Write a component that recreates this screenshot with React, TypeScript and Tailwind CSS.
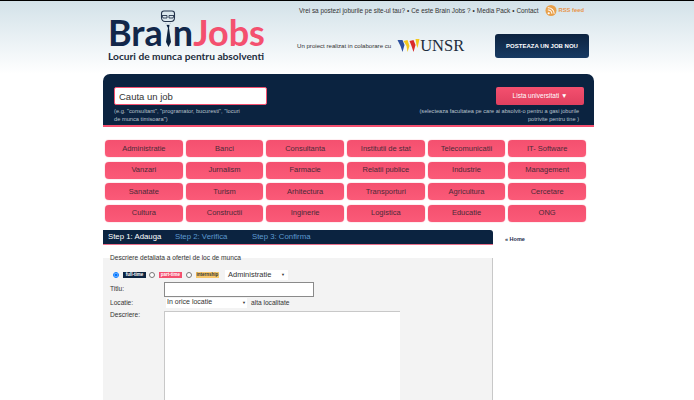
import React from "react";

const categories = [
  "Administratie", "Banci", "Consultanta", "Institutii de stat", "Telecomunicatii", "IT- Software",
  "Vanzari", "Jurnalism", "Farmacie", "Relatii publice", "Industrie", "Management",
  "Sanatate", "Turism", "Arhitectura", "Transporturi", "Agricultura", "Cercetare",
  "Cultura", "Constructii", "Inginerie", "Logistica", "Educatie", "ONG",
];

const Tie = () => (
  <svg width="16" height="38" viewBox="0 0 16 38" className="ml-[-3px] mr-[-3px] shrink-0">
    <path d="M4 1h8c1.500 0 2.500 1 2.500 2.500v4c0 2.500-1.500 4-3.500 4H5c-2 0-3.500-1.500-3.500-4v-4C1.500 2 2.500 1 4 1z" fill="none" stroke="#23324a" strokeWidth="1.1" />
    <path d="M2 5.500h5v2.500H3zM9 5.500h5l-1 2.500H9z" fill="none" stroke="#23324a" strokeWidth="0.9" />
    <path d="M5 13l3 2 3-2" fill="none" stroke="#b8c2cc" strokeWidth="0.8" />
    <path d="M6.500 15h3l-.5 3 2 14-2.500 5-2.500-5 2-14z" fill="#0c2340" />
  </svg>
);

const RssIcon = () => (
  <svg width="12" height="11" viewBox="0 0 13 12">
    <circle cx="6.500" cy="6" r="6" fill="#e8a04a" />
    <circle cx="4" cy="9" r="1.200" fill="#fff" />
    <path d="M3 5.500a4 4 0 0 1 4.500 4M3 3a6.500 6.500 0 0 1 7 6.500" fill="none" stroke="#fff" strokeWidth="1.100" />
  </svg>
);

const UnsrLogo = () => (
  <div className="flex items-center">
    <svg width="23" height="14" viewBox="0 0 22 14">
      <path d="M0 1l3 6 2 6 2-7-2-5z" fill="#2b4f9e" />
      <path d="M6 2l3 5 1 6 2-6-2-6z" fill="#f2c81e" />
      <path d="M12 2l2 5 2 6 2-7-2-5z" fill="#d92b2b" />
      <path d="M18 0l1 6 1 3 2-9z" fill="#f2c81e" />
    </svg>
    <span className="font-['Liberation_Serif',serif] text-[16.5px] leading-none text-[#1c2c3c]">UNSR</span>
  </div>
);

export default function App() {
  return (
    <div className="h-[400px] overflow-hidden border-t border-black bg-white font-['Liberation_Sans',sans-serif] text-[#333]">
      {/* header */}
      <div className="h-[73px] bg-gradient-to-b from-[#d3e2e9] to-white">
        <div className="ml-[103px] flex w-[491px]">
          <div className="ml-[5px] w-[190px] shrink-0 pt-[9px]">
            <div className="flex h-[38px] items-end whitespace-nowrap font-['Lato',sans-serif] text-[36px] font-bold leading-[32px]">
              <span className="text-[#12274a]">Bra</span>
              <Tie />
              <span className="text-[#12274a]">n</span>
              <span className="text-[#f4506f]">Jobs</span>
            </div>
            <div className="mt-[2px] whitespace-nowrap font-['Lato',sans-serif] text-[10.2px] font-bold leading-[12px] text-[#1c2c3c]">
              Locuri de munca pentru absolventi
            </div>
          </div>
          <div className="min-w-0 flex-1">
            <div className="flex h-[14px] items-center gap-[2px] whitespace-nowrap pl-[1px] pt-[5px] text-[6.4px]">
              <span>Vrei sa postezi joburile pe site-ul tau?</span>
              <span>•</span>
              <span>Ce este Brain Jobs ?</span>
              <span>•</span>
              <span>Media Pack</span>
              <span>•</span>
              <span>Contact</span>
              <span className="ml-[5px] flex items-center gap-[1px] text-[5.8px] font-bold text-[#e8944a]">
                <RssIcon />
                RSS feed
              </span>
            </div>
            <div className="mt-[19px] flex items-center">
              <span className="ml-[-1px] whitespace-nowrap text-[6.1px]">Un proiect realizat in colaborare cu</span>
              <span className="ml-[6px]">
                <UnsrLogo />
              </span>
              <button className="ml-auto mr-[5px] h-[24px] w-[94px] rounded-[3px] bg-gradient-to-b from-[#0c2340] to-[#173a63] text-[6px] font-bold text-white">
                POSTEAZA UN JOB NOU
              </button>
            </div>
          </div>
        </div>
      </div>

      {/* search panel */}
      <div className="ml-[103px] flex h-[53px] w-[491px] justify-between rounded-t-[7px] border-b-[2px] border-[#f4506f] bg-[#0b2340] pl-[11px] pr-[10px] pt-[13px]">
        <div className="w-[160px]">
          <input
            readOnly
            value="Cauta un job"
            className="block h-[18px] w-[153px] rounded-[2px] border border-[#f4506f] bg-white px-[4px] text-[9.5px] text-[#333]"
          />
          <p className="mt-[2px] text-[5.7px] leading-[8px] text-[#b8c2cc]">
            (e.g. "consultant", "programator, bucuresti", "locuri
            <br />
            de munca timisoara")
          </p>
        </div>
        <div className="flex flex-col items-end">
          <button className="h-[18px] w-[88px] rounded-[2px] bg-gradient-to-b from-[#f4506f] to-[#e0405f] text-[6.5px] text-white">
            Lista universitati ▼
          </button>
          <p className="mr-[5px] mt-[2px] whitespace-nowrap text-right text-[5.6px] leading-[8px] text-[#b8c2cc]">
            (selecteaza facultatea pe care ai absolvit-o pentru a gasi joburile
            <br />
            potrivite pentru tine )
          </p>
        </div>
      </div>

      {/* categories */}
      <div className="ml-[105px] mt-[13px] grid w-[481px] grid-cols-6 gap-x-[3px] gap-y-[4.5px]">
        {categories.map((name) => (
          <div
            key={name}
            className="flex h-[17px] items-center justify-center rounded-[4px] bg-gradient-to-b from-[#f4506f] to-[#fb5a78] text-[7.5px] text-[#4a2a38] shadow-[0_0_1px_#f4506f]"
          >
            {name}
          </div>
        ))}
      </div>

      {/* main */}
      <div className="ml-[103px] mt-[8px] flex">
        <div className="w-[390px]">
          <div className="flex h-[15px] items-center whitespace-nowrap rounded-tr-[3px] border-b border-[#e8708a] bg-[#0b2340] pl-[5px] text-[7.8px] text-[#5d9ad0]">
            <span className="w-[67px] text-white">Step 1: Adauga</span>
            <span className="w-[77px]">Step 2: Verifica</span>
            <span>Step 3: Confirma</span>
          </div>
          <div className="mt-[13px] flow-root h-[200px] border-r border-[#c8c8c8] bg-[#f3f3f3] pl-[7px] text-[6.6px]">
            <div className="mt-[-4px] leading-[8px]">Descriere detaliata a ofertei de loc de munca</div>
            <div className="mt-[8px] flex h-[10px] items-center pl-[3px]">
              <input type="radio" readOnly checked className="h-[6px] w-[6px]" />
              <span className="ml-[4px] w-[23px] overflow-hidden whitespace-nowrap bg-[#0b2340] text-center text-[4.5px] font-bold leading-[6px] text-white">full-time</span>
              <input type="radio" readOnly className="ml-[3px] h-[6px] w-[6px]" />
              <span className="ml-[4px] w-[23px] overflow-hidden whitespace-nowrap bg-[#f4506f] text-center text-[4.5px] font-bold leading-[6px] text-white">part-time</span>
              <input type="radio" readOnly className="ml-[4px] h-[6px] w-[6px]" />
              <span className="ml-[4px] w-[23px] overflow-hidden whitespace-nowrap bg-[#f6c66a] text-center text-[4.5px] font-bold leading-[6px] text-[#333]">internship</span>
              <div className="ml-[6px] flex h-[10px] w-[63px] items-center justify-between bg-white px-[3px] text-[7.5px]">
                Administratie
                <span className="text-[4px]">▼</span>
              </div>
            </div>
            <div className="mt-[2px] flex h-[15px] items-center">
              <span className="w-[54px]">Titlu:</span>
              <div className="h-[15px] w-[150px] border border-[#8a8a8a] bg-white" />
            </div>
            <div className="mt-[1px] flex h-[10px] items-center">
              <span className="w-[56px]">Locatie:</span>
              <div className="flex h-[10px] w-[81px] items-center justify-between bg-white px-[1px] text-[7px]">
                In orice locatie
                <span className="text-[4px]">▼</span>
              </div>
              <span className="ml-[4px]">alta localitate</span>
            </div>
            <div className="mt-[3px] flex">
              <span className="w-[54px] leading-[8px]">Descriere:</span>
              <div className="h-[100px] w-[236px] border-l border-t border-[#c8c8c8] bg-white" />
            </div>
          </div>
        </div>
        <div className="ml-[12px] pt-[6px] text-[5.5px] font-bold leading-[7px] text-[#1c2c4c]">« Home</div>
      </div>
    </div>
  );
}
